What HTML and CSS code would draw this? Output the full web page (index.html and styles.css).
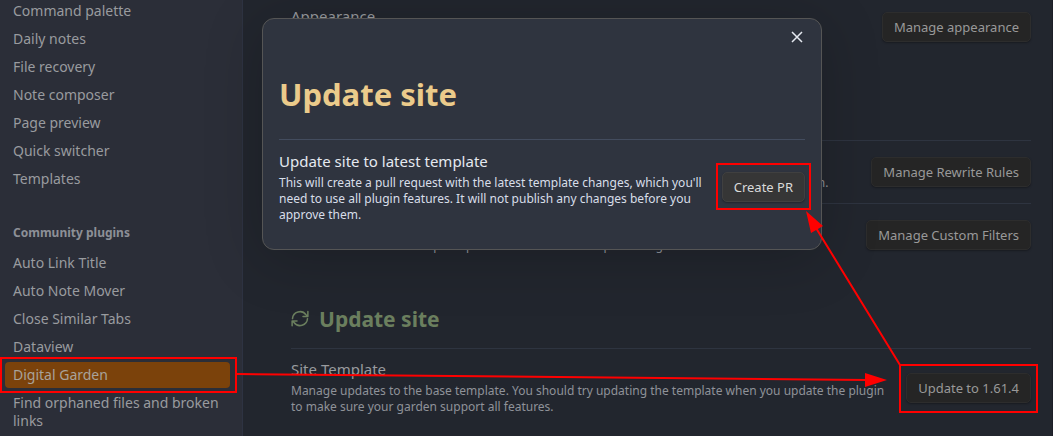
FILE: index.html
```
<!DOCTYPE html>
<html lang="en">

<head>
    <meta charset="UTF-8">
    <meta name="viewport" content="width=device-width, initial-scale=1.0">
    <title>Settings</title>
    <link rel="stylesheet" href="styles.css">
</head>

<body>
    <div class="settings">
        <nav class="sidebar">
            <ul class="nav-list core">
                <li><a href="#">Command palette</a></li>
                <li><a href="#">Daily notes</a></li>
                <li><a href="#">File recovery</a></li>
                <li><a href="#">Note composer</a></li>
                <li><a href="#">Page preview</a></li>
                <li><a href="#">Quick switcher</a></li>
                <li><a href="#">Templates</a></li>
            </ul>
            <h4 class="nav-title">Community plugins</h4>
            <ul class="nav-list">
                <li><a href="#">Auto Link Title</a></li>
                <li><a href="#">Auto Note Mover</a></li>
                <li><a href="#">Close Similar Tabs</a></li>
                <li><a href="#">Dataview</a></li>
                <li><a href="#" class="active">Digital Garden</a></li>
                <li><a href="#">Find orphaned files and broken links</a></li>
            </ul>
        </nav>

        <main class="content">
            <div class="setting-item first">
                <div class="info">
                    <div class="name">Appearance</div>
                    <div class="description">Manage themes, sitename and styling on your site</div>
                </div>
                <button type="button">Manage appearance</button>
            </div>

            <h3 class="section-title">Advanced</h3>
            <div class="setting-item">
                <div class="info">
                    <div class="name">Path Rewrite Rules</div>
                    <div class="description">Define rules to rewrite note folder structure in the garden. See the modal for more information.</div>
                </div>
                <button type="button">Manage Rewrite Rules</button>
            </div>
            <div class="setting-item">
                <div class="info">
                    <div class="name">Custom Filters</div>
                    <div class="description">Define custom rules to replace parts of the note before publishing.</div>
                </div>
                <button type="button">Manage Custom Filters</button>
            </div>

            <h3 class="section-title">
                <svg class="icon" viewBox="0 0 24 24" aria-hidden="true">
                    <path d="M2 11.5a10 10 0 0 1 18-5.2L22 8M22.500 2v6.500h-6.500M22 11.500a10 10 0 0 1-18 5.200L2 15M1.500 21v-6.500h6.500" />
                </svg>
                Update site
            </h3>
            <div class="setting-item">
                <div class="info">
                    <div class="name">Site Template</div>
                    <div class="description">Manage updates to the base template. You should try updating the template when you update the plugin to make sure your garden support all features.</div>
                </div>
                <button type="button">Update to 1.61.4</button>
            </div>
        </main>
    </div>

    <div class="modal-container">
        <div class="modal" role="dialog" aria-labelledby="modal-title">
            <button type="button" class="close" aria-label="Close">
                <svg viewBox="0 0 12 12" aria-hidden="true">
                    <path d="M1 1l10 10M11 1L1 11" />
                </svg>
            </button>
            <h1 id="modal-title">Update site</h1>
            <div class="setting-item">
                <div class="info">
                    <div class="name">Update site to latest template</div>
                    <div class="description">This will create a pull request with the latest template changes, which you'll need to use all plugin features. It will not publish any changes before you approve them.</div>
                </div>
                <button type="button">Create PR</button>
            </div>
        </div>
    </div>

    <!-- Red walkthrough marks: sidebar item, update button, create button -->
    <svg class="annotations" width="1053" height="436" viewBox="0 0 1053 436" aria-hidden="true">
        <rect x="1" y="358" width="235" height="34" />
        <rect x="900" y="365" width="137" height="47" />
        <rect x="717" y="164" width="93" height="45" />
        <path d="M237 374L868 380M900 365L816 228" />
        <path class="head" d="M887 380L865 373V387ZM806 211L811 233L823 226Z" />
    </svg>
</body>

</html>
```

FILE: styles.css
```
* {
    box-sizing: border-box;
}

body {
    margin: 0;
    font-family: "Noto Sans", sans-serif;
    background-color: #22262e;
    color: #999b9f;
}

.settings {
    display: flex;
    height: 100vh;
    overflow: hidden;
    border-right: 1px solid #1c1e27;
}

/* Sidebar */
.sidebar {
    flex: 0 0 243px;
    padding: 0 12px 0 5px;
    background-color: #2b2e38;
    border-right: 1px solid #2e3342;
}

.nav-list {
    list-style: none;
    margin: 0;
    padding: 0;
    display: flex;
    flex-direction: column;
    gap: 2px;
}

/* list is scrolled slightly past its top */
.nav-list.core {
    margin-top: -2px;
}

.nav-list a {
    display: block;
    padding: 4px 8px;
    border-radius: 4px;
    font-size: 14px;
    line-height: 18px;
    color: #999b9f;
    text-decoration: none;
}

.nav-list a.active {
    background-color: #7b420b;
    color: #a9a39b;
}

.nav-title {
    margin: 31px 0 7px;
    padding: 0 8px;
    font-size: 12px;
    line-height: 20px;
    font-weight: 700;
    color: #8d9097;
}

/* Settings page */
.content {
    flex: 1;
    padding: 0 21px 0 48px;
}

.setting-item {
    display: flex;
    align-items: center;
    gap: 16px;
    padding: 10px 0;
    border-top: 1px solid #2e3440;
}

.setting-item.first {
    margin-top: -5px;
}

.info {
    flex: 1;
    padding-bottom: 2px;
}

.name {
    font-size: 15px;
    line-height: 20px;
}

.description {
    padding-top: 4px;
    font-size: 12px;
    line-height: 16px;
    color: #8f9299;
}

.section-title {
    display: flex;
    align-items: center;
    gap: 10px;
    margin: 0;
    padding: 38px 0 14px;
    font-size: 21px;
    line-height: 30px;
    font-weight: 700;
    color: #6b7f5e;
}

.icon {
    width: 18px;
    height: 18px;
    fill: none;
    stroke: currentColor;
    stroke-width: 2;
    stroke-linecap: round;
    stroke-linejoin: round;
}

button {
    height: 30px;
    padding: 0 11px;
    border: 1px solid #2d2d2d;
    border-radius: 5px;
    background-color: #252525;
    box-shadow: 0 1px 2px rgba(0, 0, 0, 0.3);
    font-family: inherit;
    font-size: 13px;
    color: #999;
    cursor: pointer;
}

/* Modal */
.modal-container {
    position: absolute;
    inset: 0;
    padding: 18px 231px 0 262px;
}

.modal {
    position: relative;
    padding: 0 16px 15px;
    border: 1px solid #555;
    border-radius: 12px;
    background-color: #2f343f;
    box-shadow: 0 8px 60px rgba(0, 0, 0, 0.2);
    color: #e5e9f0;
}

.modal h1 {
    margin: 0;
    padding: 51px 0 21px;
    font-size: 31px;
    line-height: 48px;
    font-weight: 700;
    color: #ebcb8b;
}

.modal .setting-item {
    padding: 11px 0;
    border-top-color: #434c5e;
}

.modal .info {
    padding-bottom: 0;
}

.modal .description {
    color: #d8dee9;
}

.modal button {
    border-color: #404040;
    background-color: #363636;
    color: #dadada;
}

.modal .close {
    position: absolute;
    top: 8px;
    right: 14px;
    width: 20px;
    height: 20px;
    padding: 0;
    border: none;
    background: none;
    box-shadow: none;
}

.close svg {
    display: block;
    width: 12px;
    height: 12px;
    margin: auto;
    stroke: #e5e9f0;
    stroke-width: 1.5;
}

.annotations {
    position: absolute;
    top: 0;
    left: 0;
    fill: none;
    stroke: #f00;
    stroke-width: 2;
    pointer-events: none;
}

.annotations .head {
    fill: #f00;
    stroke: none;
}
```
